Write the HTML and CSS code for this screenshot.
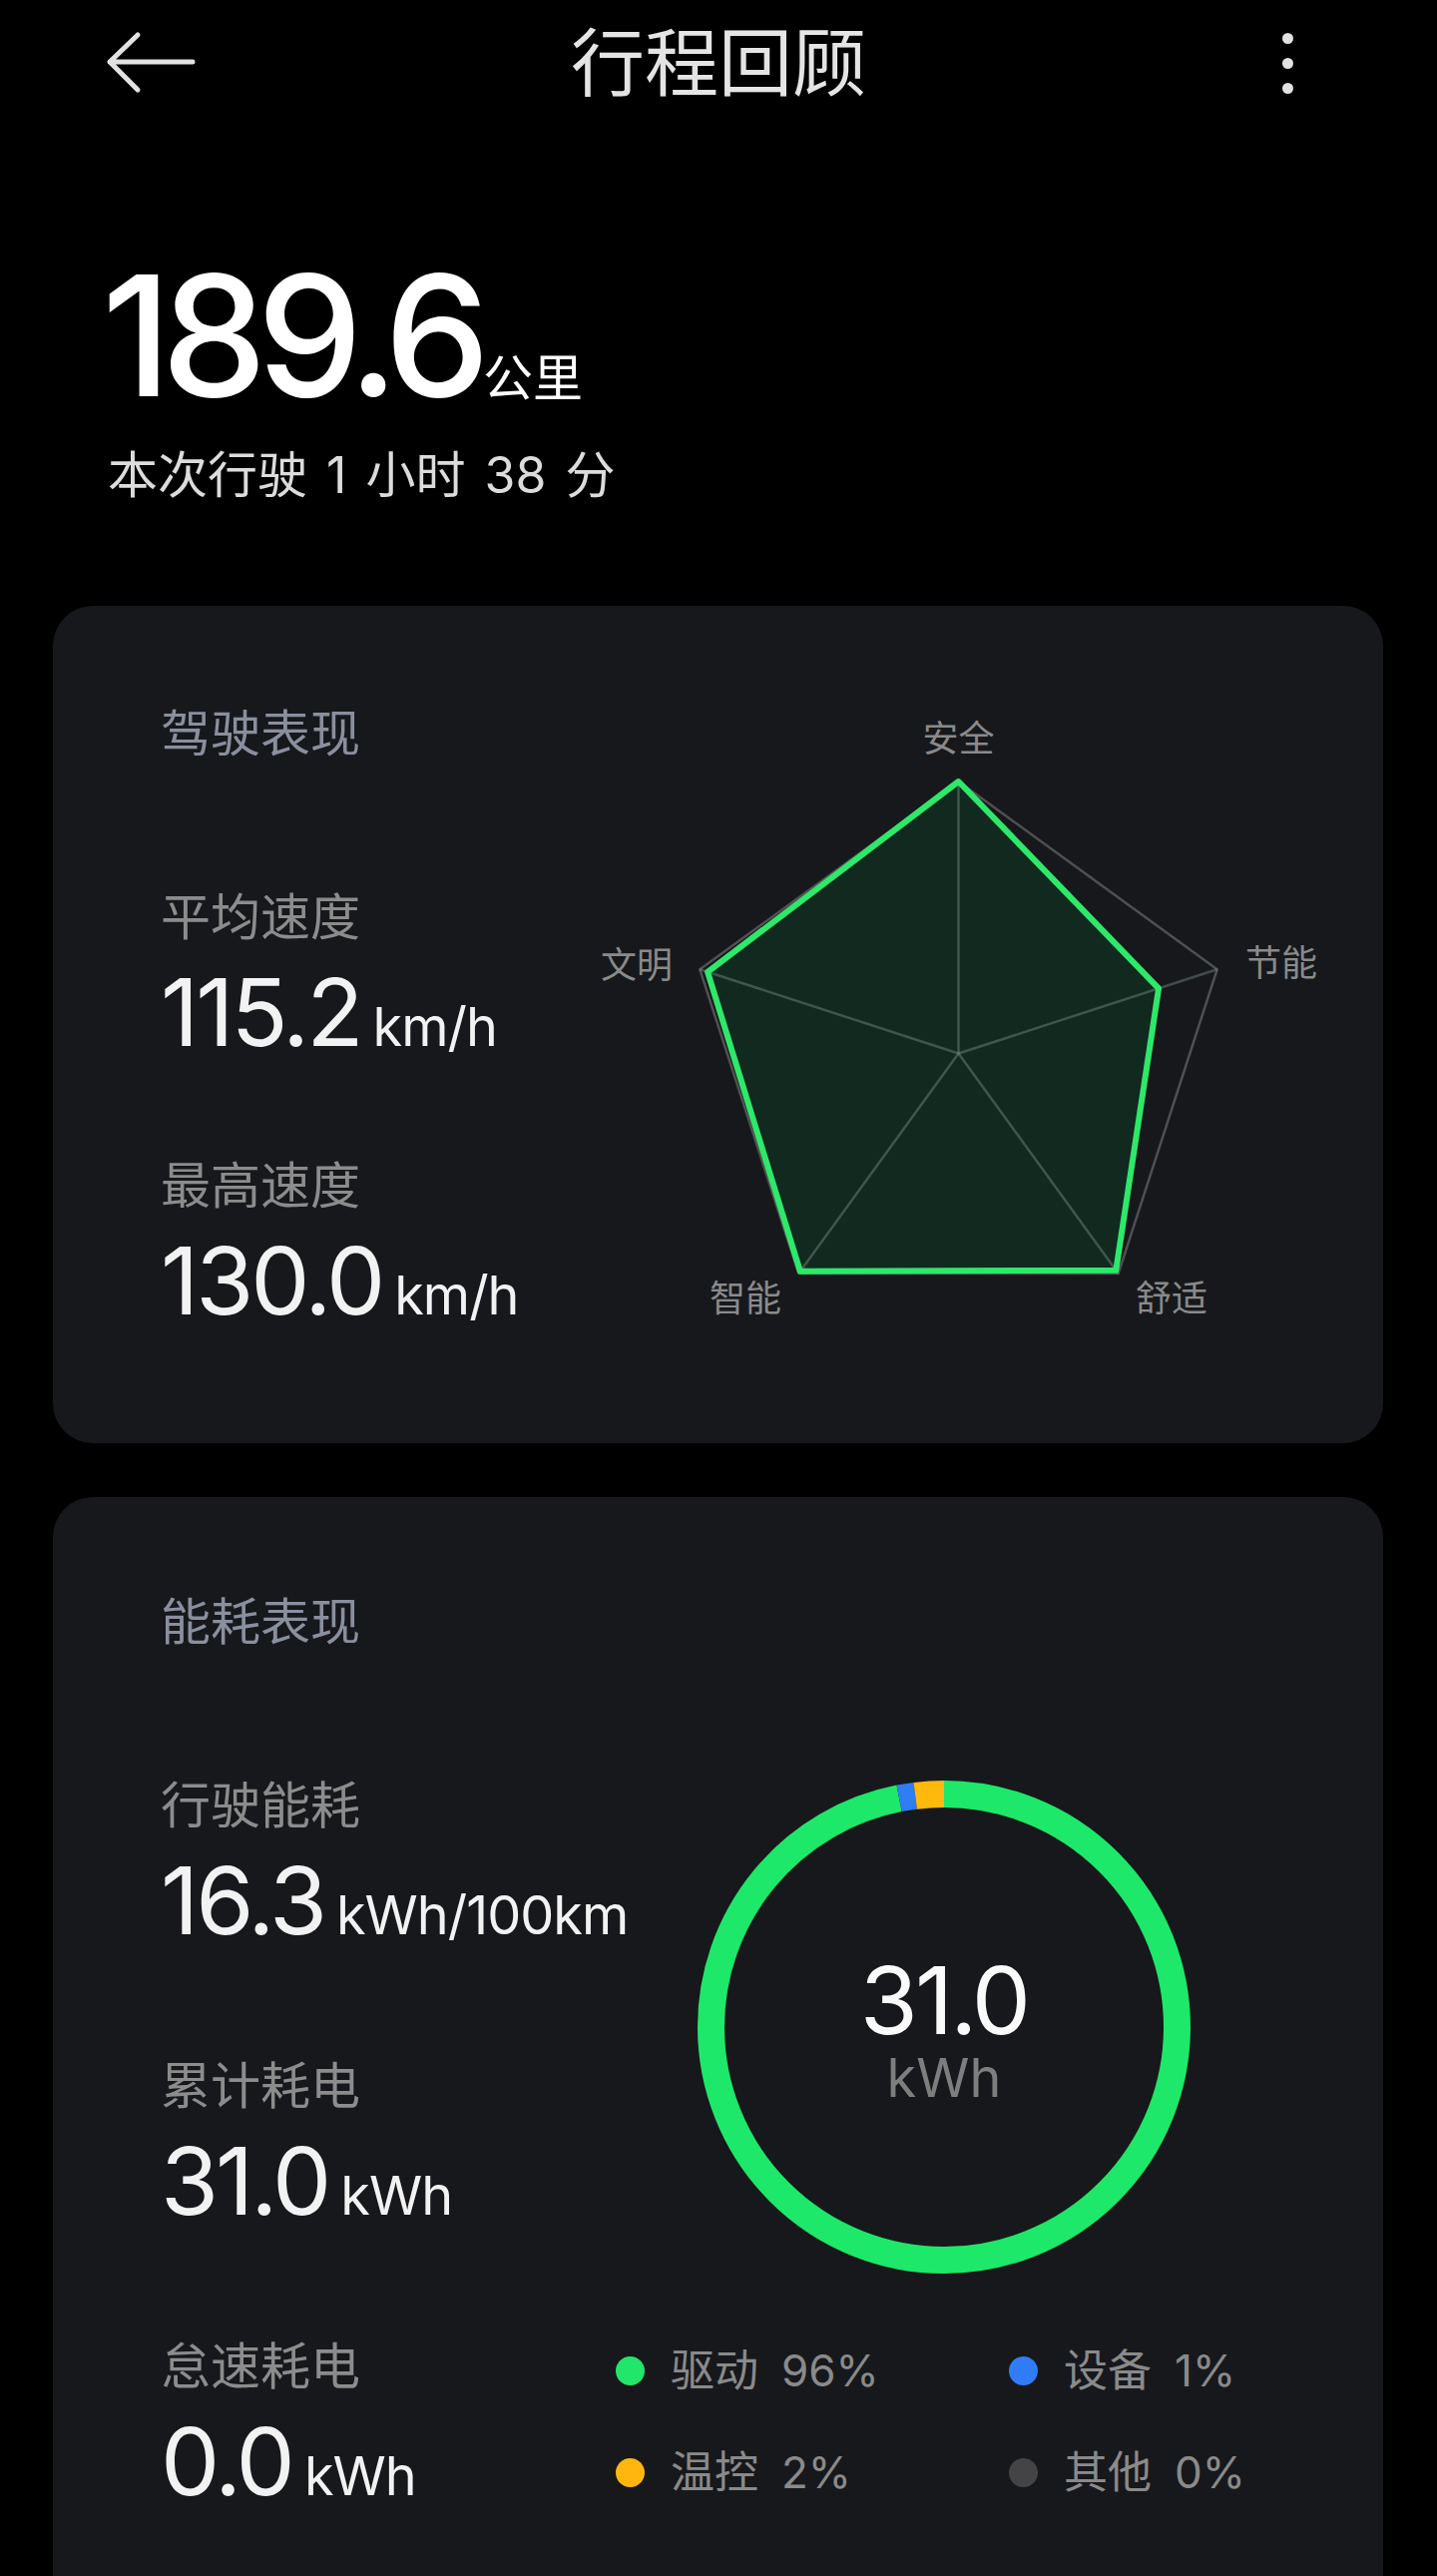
FILE: index.html
```html
<!DOCTYPE html>
<html>
    <head>
        <meta charset="utf-8">
        <link rel="stylesheet" href="styles.css">
    </head>
    <body>
        <div class="screen">
            <div class="topbar">
                <div class="back">
                    <svg width="92" height="64" viewBox="0 0 92 64">
                        <path d="M32 4 L4 31 L32 59 M4 31 L87 31" fill="none" stroke="#e2e2e2" stroke-width="5" stroke-linecap="round" stroke-linejoin="round"/>
                    </svg>
                </div>
                <div class="title">行程回顾</div>
                <div class="more"><span></span><span></span><span></span></div>
            </div>

            <div class="summary">
                <div class="distance">189.6<span class="distance-unit">公里</span></div>
                <div class="duration">本次行驶 1 小时 38 分</div>
            </div>

            <div class="card card-drive">
                <div class="stats">
                    <div class="card-title">驾驶表现</div>
                    <div class="stat first">
                        <div class="stat-label">平均速度</div>
                        <div class="stat-value">115.2<span class="unit">km/h</span></div>
                    </div>
                    <div class="stat">
                        <div class="stat-label">最高速度</div>
                        <div class="stat-value">130.0<span class="unit">km/h</span></div>
                    </div>
                </div>
                <svg class="radar" width="780" height="630" viewBox="0 0 780 630">
                    <polygon points="390.5,83 649.7,271.3 550.7,576 230.3,576 131.3,271.3" fill="none" stroke="#505052" stroke-width="2.5" stroke-linejoin="round"/>
                    <polygon points="390.5,83 591.1,290.3 548.3,572.7 231.9,573.8 139.1,273.8" fill="#11291f" stroke="none"/>
                    <g stroke="rgba(140,160,150,0.38)" stroke-width="2.5">
                        <line x1="390.5" y1="355.5" x2="390.5" y2="83"/>
                        <line x1="390.5" y1="355.5" x2="649.7" y2="271.3"/>
                        <line x1="390.5" y1="355.5" x2="550.7" y2="576"/>
                        <line x1="390.5" y1="355.5" x2="230.3" y2="576"/>
                        <line x1="390.5" y1="355.5" x2="131.3" y2="271.3"/>
                    </g>
                    <polygon points="390.5,83 591.1,290.3 548.3,572.7 231.9,573.8 139.1,273.8" fill="none" stroke="#2ee86a" stroke-width="6" stroke-linejoin="round"/>
                    <g class="radar-label">
                        <text x="390.5" y="37" text-anchor="middle">安全</text>
                        <text x="104" y="264" text-anchor="end">文明</text>
                        <text x="678" y="262" text-anchor="start">节能</text>
                        <text x="141" y="598" text-anchor="start">智能</text>
                        <text x="568" y="598" text-anchor="start">舒适</text>
                    </g>
                </svg>
            </div>

            <div class="card card-energy">
                <div class="stats">
                    <div class="card-title">能耗表现</div>
                    <div class="stat first">
                        <div class="stat-label">行驶能耗</div>
                        <div class="stat-value">16.3<span class="unit">kWh/100km</span></div>
                    </div>
                    <div class="stat">
                        <div class="stat-label">累计耗电</div>
                        <div class="stat-value">31.0<span class="unit">kWh</span></div>
                    </div>
                    <div class="stat">
                        <div class="stat-label">怠速耗电</div>
                        <div class="stat-value">0.0<span class="unit">kWh</span></div>
                    </div>
                </div>
                <div class="energy-side">
                    <div class="ring">
                        <svg width="500" height="500" viewBox="0 0 500 500">
                            <g transform="rotate(-90 250 250)" fill="none" stroke-width="27">
                                <circle cx="250" cy="250" r="233.5" stroke="#1ee869" stroke-dasharray="1421.3 1467.1"/>
                                <circle cx="250" cy="250" r="233.5" stroke="#2f7df7" stroke-dasharray="16.3 1467.1" stroke-dashoffset="-1421.3"/>
                                <circle cx="250" cy="250" r="233.5" stroke="#ffb80c" stroke-dasharray="29.4 1467.1" stroke-dashoffset="-1437.6"/>
                            </g>
                        </svg>
                        <div class="ring-text">
                            <div class="ring-value">31.0</div>
                            <div class="ring-unit">kWh</div>
                        </div>
                    </div>
                    <div class="legend">
                        <div class="legend-item"><span class="dot green"></span>驱动<span class="pct">96%</span></div>
                        <div class="legend-item"><span class="dot blue"></span>设备<span class="pct">1%</span></div>
                        <div class="legend-item"><span class="dot yellow"></span>温控<span class="pct">2%</span></div>
                        <div class="legend-item"><span class="dot gray"></span>其他<span class="pct">0%</span></div>
                    </div>
                </div>
            </div>
        </div>
    </body>
</html>
```

FILE: styles.css
```css
body{
    margin: 0;
    background-color: #000;
    font-family: Inter, "Noto Sans CJK SC", sans-serif;
}
.screen{
    width: 1440px;
    height: 2581px;
    overflow: hidden;
    background-color: #000;
}
.topbar{
    height: 126px;
    display: grid;
    grid-template-columns: 1fr auto 1fr;
    align-items: center;
}
.back{
    padding-left: 106px;
    height: 64px;
}
.title{
    font-size: 74px;
    line-height: 74px;
    color: #e4e4e4;
}
.more{
    justify-self: end;
    padding-right: 144px;
    display: flex;
    flex-direction: column;
    gap: 14px;
}
.more span{
    display: block;
    width: 11px;
    height: 11px;
    border-radius: 50%;
    background-color: #e2e2e2;
}
.summary{
    padding: 126px 0 0 108px;
}
.distance{
    font-size: 168px;
    line-height: 168px;
    font-weight: 500;
    color: #fff;
    letter-spacing: -10px;
    margin-left: -6px;
}
.distance-unit{
    font-size: 50px;
    line-height: 1;
    font-weight: 400;
    letter-spacing: 0;
    margin-left: 3px;
}
.duration{
    margin-top: 26px;
    font-size: 50px;
    line-height: 60px;
    word-spacing: 5px;
    color: #dcdcdc;
}
.card{
    margin: 0 54px 0 53px;
    background-color: #17181c;
    border-radius: 40px;
    display: flex;
    align-items: flex-start;
}
.card-drive{
    margin-top: 101px;
    height: 839px;
}
.card-energy{
    margin-top: 54px;
    height: 1140px;
}
.stats{
    padding-left: 108px;
    color: #f2f2f2;
}
.card-drive .stats{
    width: 409px;
    padding-top: 98px;
}
.card-energy .stats{
    width: 456px;
    padding-top: 95px;
}
.card-title{
    font-size: 50px;
    line-height: 60px;
    color: #8a8f9e;
}
.stat{
    margin-top: 89px;
}
.card-energy .stat{
    margin-top: 101px;
}
.stat.first,
.card-energy .stat.first{
    margin-top: 124px;
}
.stat-label{
    font-size: 50px;
    line-height: 60px;
    color: #8c8c8c;
}
.stat-value{
    margin-top: 10px;
    font-size: 94px;
    line-height: 110px;
    letter-spacing: -3px;
    white-space: nowrap;
}
.unit{
    font-size: 54px;
    line-height: 1;
    letter-spacing: -1px;
    margin-left: 12px;
}
.radar{
    display: block;
    margin-top: 93px;
}
.radar-label text{
    font-family: "Noto Sans CJK SC", sans-serif;
    font-size: 36px;
    fill: #8a8a8a;
    dominant-baseline: central;
}
.energy-side{
    display: flex;
    flex-direction: column;
}
.ring{
    display: grid;
    margin-top: 281px;
    margin-left: 79px;
    width: 500px;
}
.ring svg,
.ring-text{
    grid-area: 1 / 1;
}
.ring svg{
    display: block;
}
.ring-text{
    padding-top: 175px;
    text-align: center;
}
.ring-value{
    font-size: 94px;
    line-height: 96px;
    color: #fafafa;
    letter-spacing: -3px;
}
.ring-unit{
    font-size: 54px;
    line-height: 60px;
    color: #7e7e7e;
}
.legend{
    margin-top: 64px;
    display: grid;
    grid-template-columns: 394px 300px;
    row-gap: 42px;
}
.legend-item{
    display: flex;
    align-items: center;
    font-size: 44px;
    line-height: 60px;
    color: #8a8a8a;
}
.dot{
    width: 29px;
    height: 29px;
    border-radius: 50%;
    margin-right: 26px;
}
.pct{
    margin-left: 23px;
}
.green{
    background-color: #22e66a;
}
.blue{
    background-color: #2f7cf6;
}
.yellow{
    background-color: #ffb70f;
}
.gray{
    background-color: #444446;
}
```
